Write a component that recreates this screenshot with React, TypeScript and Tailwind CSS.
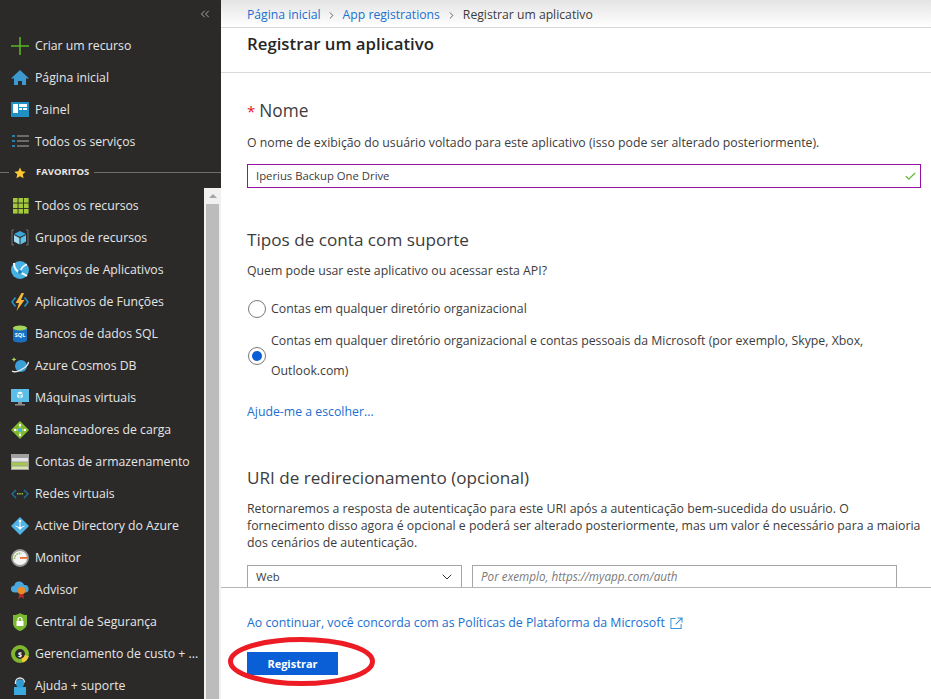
import { ChevronDown, ChevronRight, ChevronsLeft, Check } from "lucide-react"
import type { ReactNode } from "react"

const Plus = () => (
  <svg viewBox="0 0 18 18" className="w-[18px] h-[18px]"><path d="M9 0v18M0 9h18" stroke="#59b224" strokeWidth="1.6" /></svg>
)
const Home = () => (
  <svg viewBox="0 0 18 18" className="w-[18px] h-[18px]"><path d="M9 1 0 9.500h3V16h4v-4h4v4h4V9.500h3z" fill="#3c9ad0" /></svg>
)
const Dash = () => (
  <svg viewBox="0 0 18 18" className="w-[18px] h-[18px]"><rect y="1" width="18" height="15" fill="#1f8fc4" /><path d="M2 3h5v9H2zM8 3h8v3H8zM8 7h3v2H8zM12 7h4v2h-4z" fill="#fff" /></svg>
)
const List = () => (
  <svg viewBox="0 0 18 18" className="w-[18px] h-[18px]">
    <path d="M1 2h3v2H1zM1 7h3v2H1zM1 12h3v2H1z" fill="#2a7fa8" />
    <path d="M6 2h12v2H6zM6 7h12v2H6zM6 12h12v2H6z" fill="#6b6b6b" />
  </svg>
)
const Grid = () => (
  <svg viewBox="0 0 18 18" className="w-[18px] h-[18px]">
    {[1, 6.5, 12].map((y) => [2, 7.5, 13].map((x) => <rect key={`${x}-${y}`} x={x} y={y} width="4.6" height="4.6" fill="#a2c93a" />))}
  </svg>
)
const Cube = () => (
  <svg viewBox="0 0 18 18" className="w-[18px] h-[18px]">
    <path d="M3 1H1v15h2M15 1h2v15h-2" fill="none" stroke="#6f6f6f" />
    <path d="M9 2 15 5 9 8 3 5z" fill="#3aa5d8" /><path d="M3 6l5.500 3v6.500L3 12.500z" fill="#9fdcf2" /><path d="M15 6 9.500 9v6.500L15 12.500z" fill="#5fc0e8" />
  </svg>
)
const Globe = () => (
  <svg viewBox="0 0 18 18" className="w-[18px] h-[18px]">
    <circle cx="9" cy="9" r="9" fill="#46b0e4" />
    <path d="M3 2c0 5 2 8 6 9.500 3 1 5 2 7 3.500" fill="none" stroke="#f2fafd" strokeWidth="2" />
    <path d="M9 11.500C10 7 12 4.500 16 3.500" fill="none" stroke="#f2fafd" strokeWidth="1.600" />
    <circle cx="9" cy="11" r="2" fill="#1f7fb8" />
  </svg>
)
const Bolt = () => (
  <svg viewBox="0 0 18 18" className="w-[18px] h-[18px]">
    <path d="M4.500 4.500 1 9l3.500 4.500M13.500 4.500 17 9l-3.500 4.500" fill="none" stroke="#2a8fc4" strokeWidth="1.700" />
    <path d="M10.500 0 4.500 10h3.500L5.500 18 13.500 7H10L13 0z" fill="#f6b93b" />
  </svg>
)
const Sql = () => (
  <svg viewBox="0 0 18 18" className="w-[18px] h-[18px]">
    <path d="M2 3v12c0 1.500 3 2.500 7 2.500s7-1 7-2.500V3z" fill="#1a6fc0" />
    <ellipse cx="9" cy="3" rx="7" ry="2.500" fill="#a5d55a" />
    <text x="9" y="12" textAnchor="middle" fontSize="5.500" fontWeight="700" fill="#fff" fontFamily="Open Sans, sans-serif">SQL</text>
  </svg>
)
const Cosmos = () => (
  <svg viewBox="0 0 18 18" className="w-[18px] h-[18px]">
    <circle cx="10" cy="9" r="6" fill="#3aa0d8" />
    <path d="M1 14c3 2 9-1 12-3s5-5 4-6" fill="none" stroke="#dfe6ea" strokeWidth="1.400" />
    <path d="M3 0l.7 1.800L5.500 2.500l-1.800.7L3 5l-.7-1.800L.5 2.500l1.800-.7z" fill="#b5d96a" />
  </svg>
)
const Vm = () => (
  <svg viewBox="0 0 18 18" className="w-[18px] h-[18px]">
    <rect y="0" width="18" height="13" fill="#5cbde6" />
    <path d="M9 2.500 12 4 9 5.500 6 4z" fill="#fff" /><path d="M6 5 8.500 6.500v3L6 8zM12 5 9.500 6.500v3L12 8z" fill="#d5effa" />
    <path d="M7 13h4v2H7zM4 15h10v1.500H4z" fill="#8a8a8a" />
  </svg>
)
const Balancer = () => (
  <svg viewBox="0 0 18 18" className="w-[18px] h-[18px]">
    <path d="M9 0 18 9 9 18 0 9z" fill="#7fba2e" />
    <path d="M9 3.500v11M3.500 9h11" stroke="#cfe8a0" strokeWidth="1" />
    <circle cx="9" cy="9" r="2" fill="#45a7dc" /><circle cx="9" cy="4" r="1.200" fill="#fff" /><circle cx="9" cy="14" r="1.200" fill="#fff" /><circle cx="4" cy="9" r="1.200" fill="#fff" /><circle cx="14" cy="9" r="1.200" fill="#fff" />
  </svg>
)
const Storage = () => (
  <svg viewBox="0 0 18 18" className="w-[18px] h-[18px]">
    <rect y="1" width="18" height="16" fill="#a0a0a0" />
    <rect x="1" y="5" width="16" height="3.500" fill="#e4e4e4" /><rect x="1" y="9.500" width="16" height="3" fill="#a5c94a" /><rect x="1" y="13.500" width="16" height="2.500" fill="#d8e6a8" />
  </svg>
)
const Vnet = () => (
  <svg viewBox="0 0 18 18" className="w-[18px] h-[18px]">
    <path d="M5 5 1 9l4 4M13 5l4 4-4 4" fill="none" stroke="#1c7aa8" strokeWidth="1.200" />
    <path d="M6 8h1.500v1.500H6zM8.300 8h1.500v1.500H8.300zM10.600 8h1.500v1.500h-1.500z" fill="#8cc63f" />
  </svg>
)
const Aad = () => (
  <svg viewBox="0 0 18 18" className="w-[18px] h-[18px]">
    <path d="M9 0 18 9 9 18 0 9z" fill="#4fb3e6" />
    <path d="M9 3v8M9 11 4.500 9M9 11l4.500-2" stroke="#fff" strokeWidth="1" fill="none" />
    <circle cx="9" cy="11" r="1.500" fill="#fff" /><circle cx="9" cy="4" r="1.300" fill="#fff" />
  </svg>
)
const MonitorIcon = () => (
  <svg viewBox="0 0 18 18" className="w-[18px] h-[18px]">
    <circle cx="9" cy="9" r="8" fill="#f4f4f4" stroke="#9a9a9a" strokeWidth="1.800" />
    <path d="M3.500 10a5.500 5.500 0 0 1 7-5.500" fill="none" stroke="#8cc63f" strokeWidth="1.800" strokeDasharray="1.500 1" />
    <path d="M9 8h7v1.800H9z" fill="#ef6c2f" />
  </svg>
)
const AdvisorIcon = () => (
  <svg viewBox="0 0 18 18" className="w-[18px] h-[18px]">
    <path d="M3.500 11.500a3.500 3.500 0 0 1-.2-7A5 5 0 0 1 13 4a3.800 3.800 0 0 1 1.500 7.500z" fill="#4aa8de" />
    <path d="M8 13 7.500 18 10.500 16 13 18 12.500 13z" fill="#b02a2a" />
    <circle cx="10.500" cy="9.500" r="3.800" fill="#f08a24" />
  </svg>
)
const Shield = () => (
  <svg viewBox="0 0 18 18" className="w-[18px] h-[18px]">
    <path d="M9 0c2 1.500 4 2 7 2v8c0 4-3 6.500-7 8-4-1.500-7-4-7-8V2c3 0 5-.5 7-2z" fill="#7ab82e" />
    <rect x="5.500" y="8" width="7" height="5" fill="#fff" /><path d="M7 8V6.500a2 2 0 0 1 4 0V8" fill="none" stroke="#fff" strokeWidth="1.200" />
  </svg>
)
const Cost = () => (
  <svg viewBox="0 0 18 18" className="w-[18px] h-[18px]">
    <circle cx="9" cy="9" r="7" fill="#2b2a29" stroke="#7fb62e" strokeWidth="4" />
    <path d="M15.800 10.500a7 7 0 0 1-4.800 5.200" fill="none" stroke="#f3c93c" strokeWidth="4" />
    <text x="9" y="11.500" textAnchor="middle" fontSize="7" fontWeight="700" fill="#fff" fontFamily="Open Sans, sans-serif">$</text>
  </svg>
)
const Help = () => (
  <svg viewBox="0 0 18 18" className="w-[18px] h-[18px]">
    <path d="M3 10h12v8H3z" fill="#3aa9e0" />
    <circle cx="9" cy="6.500" r="4.200" fill="#2f9bd4" />
    <path d="M4.500 7V5.500a4.500 4.500 0 0 1 9 0" fill="none" stroke="#e4e4e4" strokeWidth="1.300" />
  </svg>
)

const topItems: { label: string; icon: ReactNode }[] = [
  { label: "Criar um recurso", icon: <Plus /> },
  { label: "Página inicial", icon: <Home /> },
  { label: "Painel", icon: <Dash /> },
  { label: "Todos os serviços", icon: <List /> },
]

const favItems: { label: string; icon: ReactNode }[] = [
  { label: "Todos os recursos", icon: <Grid /> },
  { label: "Grupos de recursos", icon: <Cube /> },
  { label: "Serviços de Aplicativos", icon: <Globe /> },
  { label: "Aplicativos de Funções", icon: <Bolt /> },
  { label: "Bancos de dados SQL", icon: <Sql /> },
  { label: "Azure Cosmos DB", icon: <Cosmos /> },
  { label: "Máquinas virtuais", icon: <Vm /> },
  { label: "Balanceadores de carga", icon: <Balancer /> },
  { label: "Contas de armazenamento", icon: <Storage /> },
  { label: "Redes virtuais", icon: <Vnet /> },
  { label: "Active Directory do Azure", icon: <Aad /> },
  { label: "Monitor", icon: <MonitorIcon /> },
  { label: "Advisor", icon: <AdvisorIcon /> },
  { label: "Central de Segurança", icon: <Shield /> },
  { label: "Gerenciamento de custo + ...", icon: <Cost /> },
  { label: "Ajuda + suporte", icon: <Help /> },
]

function NavItem({ label, icon }: { label: string; icon: ReactNode }) {
  return (
    <div className="h-8 shrink-0 flex items-center pl-[11px] gap-[6px] text-[12.25px] text-[#e6e6e6] whitespace-nowrap">
      {icon}
      <span>{label}</span>
    </div>
  )
}

export default function App() {
  return (
    <div className="relative w-[931px] h-[699px] overflow-hidden flex bg-white font-['Open_Sans',sans-serif] text-[12.3px] text-[#3c3c3c]">
      {/* Menu lateral */}
      <aside className="w-[221px] shrink-0 h-full flex flex-col bg-[#2b2a29]">
        <div className="h-[30px] shrink-0 flex justify-end items-start pt-[7px] pr-[9px]">
          <ChevronsLeft size={14} className="text-[#b8b8b8]" strokeWidth={1.5} />
        </div>
        {topItems.map((item) => <NavItem key={item.label} {...item} />)}
        <div className="h-8 shrink-0 flex items-center pb-[3px]">
          <div className="w-[9px] h-px bg-[#6e6e6e]" />
          <svg viewBox="0 0 24 24" className="w-3 h-3 ml-[5px]"><path d="m12 1 3.400 7.400 8 .9-6 5.400 1.700 8L12 18.700 4.900 22.700l1.700-8-6-5.400 8-.9z" fill="#fcc931" /></svg>
          <span className="ml-[10px] text-[9.500px] font-bold text-[#e6e6e6]">FAVORITOS</span>
          <div className="flex-1 h-px bg-[#6e6e6e] ml-[5px]" />
        </div>
        <div className="flex-1 min-h-0 flex">
          <div className="flex-1 min-w-0 overflow-hidden">
            {favItems.map((item) => <NavItem key={item.label} {...item} />)}
          </div>
          <div className="w-[17px] shrink-0 -mt-[2px] flex flex-col bg-[#f1f1f1]">
            <div className="h-[16px] flex items-center justify-center">
              <div className="w-0 h-0 border-x-[4px] border-x-transparent border-b-[4px] border-b-[#a6a6a6]" />
            </div>
            <div className="flex-1 mx-[2px] bg-[#bcbcbc]" />
          </div>
        </div>
      </aside>

      {/* Conteúdo */}
      <main className="flex-1 min-w-0 h-full flex flex-col">
        <div className="h-[28px] shrink-0 flex items-center gap-[6px] pl-[26px] pt-[3px] border-b border-[#d6d6d6] bg-gradient-to-b from-[#e4e4e4] to-white text-[12.2px]">
          <span className="text-[#1a6fd0] mr-[-1px]">Página inicial</span>
          <ChevronRight size={11} className="text-[#555]" />
          <span className="text-[#1a6fd0]">App registrations</span>
          <ChevronRight size={11} className="text-[#555]" />
          <span className="text-[#3c3c3c]">Registrar um aplicativo</span>
        </div>
        <div className="h-[45px] shrink-0 border-b border-[#d9d9d9] pl-[26px] pt-[3px] text-[16.8px] font-semibold text-[#262626]">
          Registrar um aplicativo
        </div>

        <div className="flex-1 min-h-0 overflow-hidden pl-[26px] pr-[10px]">
          <h2 className="mt-[25px] h-[26px] text-[17.3px] leading-[26px] text-[#3c3c3c]">
            <span className="text-[#e81123] text-[15px] mr-[4px]">*</span>Nome
          </h2>
          <p className="mt-[9px] h-[20px] leading-[20px] whitespace-nowrap">
            O nome de exibição do usuário voltado para este aplicativo (isso pode ser alterado posteriormente).
          </p>
          <div className="mt-[11px] h-[24px] flex items-center justify-between border border-[#93129e] pl-[8px] pr-[3px] text-[11.3px]">
            <span>Iperius Backup One Drive</span>
            <Check size={13} className="text-[#59b224]" strokeWidth={2} />
          </div>

          <h2 className="mt-[39px] h-[26px] text-[17.15px] leading-[26px]">Tipos de conta com suporte</h2>
          <p className="mt-[8px] h-[20px] leading-[20px]">Quem pode usar este aplicativo ou acessar esta API?</p>

          <div className="mt-[18px] flex items-center gap-[5px] pl-px">
            <div className="w-[18px] h-[18px] rounded-full border border-[#7a7a7a]" />
            <span className="leading-[20px]">Contas em qualquer diretório organizacional</span>
          </div>
          <div className="mt-[7px] flex items-center gap-[5px] pl-px">
            <div className="w-[18px] h-[18px] shrink-0 rounded-full border border-[#7a7a7a] flex items-center justify-center">
              <div className="w-[10px] h-[10px] rounded-full bg-[#0a5fd6]" />
            </div>
            <span className="leading-[30px]">
              Contas em qualquer diretório organizacional e contas pessoais da Microsoft (por exemplo, Skype, Xbox, Outlook.com)
            </span>
          </div>

          <div className="mt-[16px] h-[20px] leading-[20px] text-[#1a6fd0]">Ajude-me a escolher...</div>

          <h2 className="mt-[43px] h-[26px] text-[17.1px] leading-[26px]">URI de redirecionamento (opcional)</h2>
          <p className="mt-[9px] leading-[17px]">
            Retornaremos a resposta de autenticação para este URI após a autenticação bem-sucedida do usuário. O fornecimento disso agora é opcional e poderá ser alterado posteriormente, mas um valor é necessário para a maioria dos cenários de autenticação.
          </p>
          <div className="mt-[14px] flex gap-[10px] pr-[24px] text-[11.3px]">
            <div className="w-[215px] h-[24px] shrink-0 border border-[#a6a6a6] flex items-center justify-between pl-[8px] pr-[6px]">
              <span>Web</span>
              <ChevronDown size={16} strokeWidth={1.5} className="text-[#333]" />
            </div>
            <div className="flex-1 h-[24px] border border-[#a6a6a6] flex items-center pl-[8px] italic text-[11.7px] text-[#7a7a7a]">
              Por exemplo, https://myapp.com/auth
            </div>
          </div>
        </div>

        <footer className="h-[112px] shrink-0 border-t border-[#b5b5b5] bg-white pl-[26px] pt-[25px]">
          <div className="h-[20px] flex items-center gap-[5px] text-[#1a6fd0] text-[12.35px]">
            <span>Ao continuar, você concorda com as Políticas de Plataforma da Microsoft</span>
            <svg viewBox="0 0 14 14" className="w-[13px] h-[13px]"><path d="M6 1.500H1v11h11v-5M8 1h5v5M13 1 6 8" fill="none" stroke="#3a96d8" strokeWidth="1.100" /></svg>
          </div>
          <button className="mt-[19px] w-[91px] h-[23px] pt-px bg-[#0a5fd6] text-white text-[11px] font-bold">Registrar</button>
        </footer>
      </main>

      {/* Marcação vermelha sobre o botão */}
      <svg className="absolute left-[226px] top-[636px] w-[152px] h-[52px]" viewBox="0 0 152 52">
        <ellipse cx="75.500" cy="25.500" rx="71" ry="22" fill="none" stroke="#ed1c24" strokeWidth="5" />
      </svg>
    </div>
  )
}
